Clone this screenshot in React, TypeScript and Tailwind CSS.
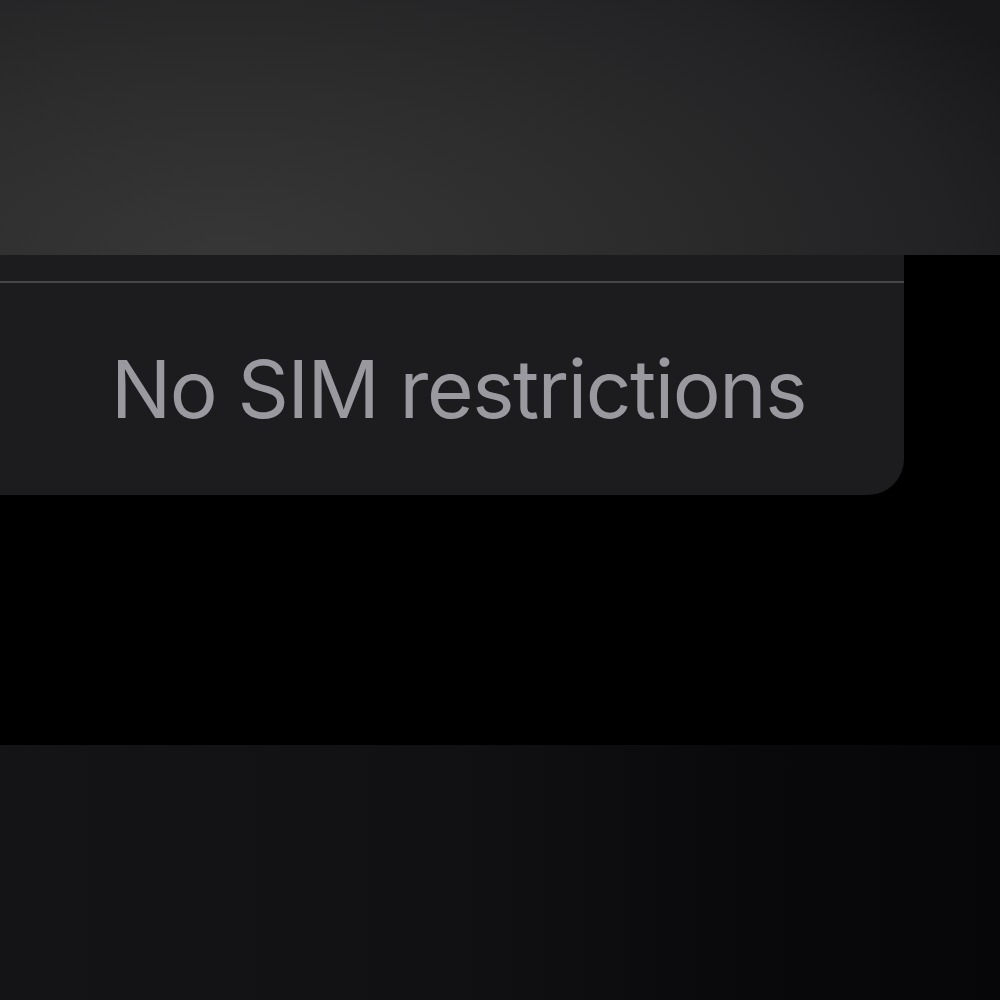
export default function App() {
  return (
    <div className="flex h-[1000px] w-[1000px] flex-col bg-black" style={{ fontFamily: "Inter, 'Noto Sans', sans-serif" }}>
      <div className="h-[255px] w-full bg-[radial-gradient(ellipse_900px_420px_at_230px_260px,#373737_0%,#2c2c2d_45%,#222224_80%,#18181a_100%)]" />
      <div className="flex h-[490px] w-full">
        <div className="flex h-[240px] w-[904px] flex-col rounded-br-[36px] bg-[#1c1c1e]">
          <div className="h-[26px] shrink-0" />
          <div className="h-[2px] shrink-0 bg-[#47474a]" />
          <div className="flex flex-1 items-center pl-[111px]">
            <span className="text-[80px] leading-none tracking-[-1.4px] text-[#9a999f]">No SIM restrictions</span>
          </div>
        </div>
      </div>
      <div className="flex-1 bg-[linear-gradient(90deg,#141416_0%,#111113_45%,#09090b_75%,#060608_100%)]" />
    </div>
  );
}
